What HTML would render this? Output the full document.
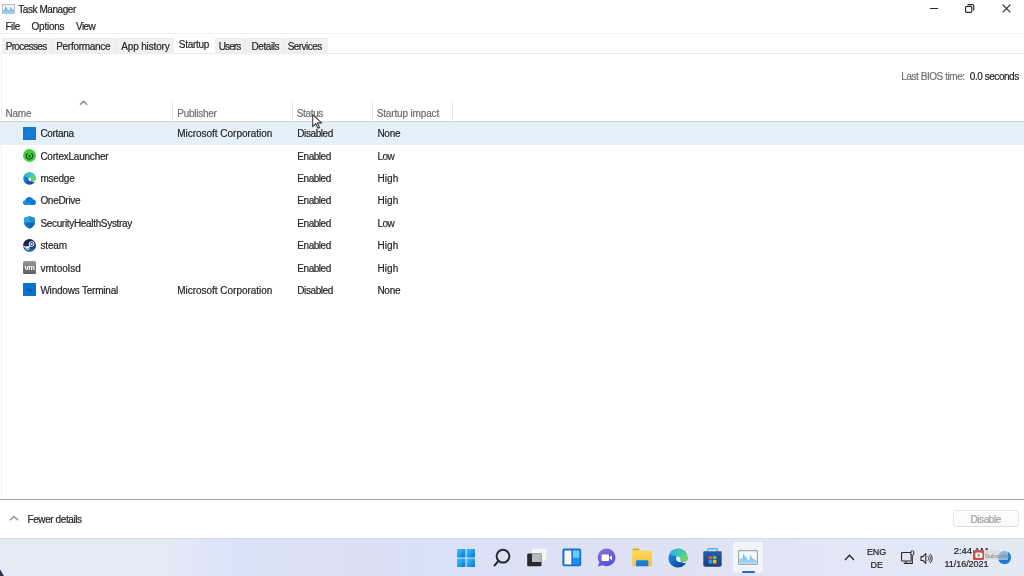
<!DOCTYPE html>
<html><head><meta charset="utf-8">
<style>
html,body{margin:0;padding:0;}
body{width:1024px;height:576px;overflow:hidden;position:relative;background:#fff;font-family:"Liberation Sans",sans-serif;font-size:10px;color:#262626;}
.a{position:absolute;}
.t{position:absolute;white-space:nowrap;line-height:12px;font-size:10px;}
.hl{position:absolute;height:1px;}
.vl{position:absolute;width:1px;}
body > *{filter:blur(0.3px);}
.t{-webkit-text-stroke:0.2px currentColor;}
</style></head><body>
<!-- title bar -->
<svg class="a" style="left:1.5px;top:3.8px" width="13" height="10" viewBox="0 0 13 10">
 <defs><linearGradient id="tmg" x1="0" y1="0" x2="0" y2="1"><stop offset="0" stop-color="#3f9ad8"/><stop offset="1" stop-color="#a6dbf8"/></linearGradient></defs>
 <rect x="0.5" y="0.5" width="12" height="9" fill="#f1f4f8" stroke="#bcbcbc" stroke-width="1"/>
 <path d="M1 9.5 L1 6.5 L2.6 6 L3.8 2 L5 4.8 L6.6 6.4 L7.6 6 L8.7 2.8 L9.8 5.2 L12 5.8 L12 9.5Z" fill="url(#tmg)"/>
</svg>
<!-- window controls -->
<div class="a" style="left:929.5px;top:7.6px;width:8.5px;height:1.3px;background:#2a2a2a"></div>
<svg class="a" style="left:965px;top:4px" width="10" height="9" viewBox="0 0 10 9"><rect x="0.6" y="2.4" width="6.2" height="6" rx="1.2" fill="none" stroke="#2a2a2a" stroke-width="1.2"/><path d="M2.6 0.6 H7.2 A1.6 1.6 0 0 1 8.8 2.2 V6.4" fill="none" stroke="#2a2a2a" stroke-width="1.2"/></svg>
<svg class="a" style="left:1002px;top:4px" width="9" height="9" viewBox="0 0 9 9"><path d="M0.6 0.6 L8.4 8.4 M8.4 0.6 L0.6 8.4" stroke="#2a2a2a" stroke-width="1.2"/></svg>
<!-- menu -->
<div class="hl" style="left:0;top:33px;width:1024px;background:#f0f0f0"></div>
<!-- tabs -->
<div class="a" style="left:2px;top:38px;width:326px;height:15px;background:#f0f0f0"></div>
<div class="vl" style="left:52px;top:39px;height:14px;background:#e9e9e9"></div>
<div class="vl" style="left:115px;top:39px;height:14px;background:#e9e9e9"></div>
<div class="vl" style="left:245px;top:39px;height:14px;background:#e9e9e9"></div>
<div class="vl" style="left:284px;top:39px;height:14px;background:#e9e9e9"></div>
<div class="a" style="left:174px;top:36px;width:41px;height:18px;background:#fff"></div>
<div class="hl" style="left:0;top:53px;width:1024px;background:#ececec"></div>
<!-- BIOS -->
<div class="vl" style="left:1px;top:54px;height:445px;background:#f3f3f3"></div>
<!-- headers -->
<svg class="a" style="left:79px;top:99px" width="10" height="7" viewBox="0 0 10 7"><path d="M1.3 5.4 L4.6 2.2 L7.9 5.4" fill="none" stroke="#8c8c8c" stroke-width="1.35" stroke-linecap="round"/></svg>
<div class="vl" style="left:172px;top:101px;height:20px;background:#e5e5e5"></div>
<div class="vl" style="left:292px;top:101px;height:20px;background:#e5e5e5"></div>
<div class="vl" style="left:372px;top:101px;height:20px;background:#e5e5e5"></div>
<div class="vl" style="left:452px;top:101px;height:20px;background:#e5e5e5"></div>
<div class="hl" style="left:0;top:121px;width:1024px;background:#d2d6dc"></div>
<div class="hl" style="left:0;top:122px;width:1024px;background:#e6eaf0"></div>
<!-- rows -->
<div class="a" style="left:0;top:123px;width:1024px;height:22px;background:linear-gradient(#e3f1f9,#e5f0f9)"></div>
<svg class="a" style="left:23px;top:127.0px" width="13" height="13" viewBox="0 0 13 13"><rect x="0" y="0" width="13" height="13" fill="#1774d2"/><rect x="2" y="2" width="9" height="9" fill="#1a7ad6"/></svg>
<svg class="a" style="left:23px;top:149.3px" width="13" height="13" viewBox="0 0 13 13"><circle cx="6.5" cy="6.5" r="6.5" fill="#3fcf3b"/><path d="M4.3 4.6 A3.2 3.2 0 1 0 8.7 4.6" fill="none" stroke="#1f4a24" stroke-width="1.3" stroke-linecap="round"/><circle cx="6.5" cy="7" r="1.2" fill="#1f4a24"/></svg>
<svg class="a" style="left:23px;top:171.8px" width="13" height="13" viewBox="0 0 20 20">
<defs>
<linearGradient id="ebL" x1="0" y1="0.1" x2="0.5" y2="1"><stop offset="0" stop-color="#22a6e6"/><stop offset="0.55" stop-color="#1272cc"/><stop offset="1" stop-color="#0d4a98"/></linearGradient>
<linearGradient id="egL" x1="0" y1="0" x2="1" y2="0.5"><stop offset="0" stop-color="#2ab2e6"/><stop offset="0.5" stop-color="#36c6c0"/><stop offset="1" stop-color="#6ad85a"/></linearGradient>
</defs>
<circle cx="10" cy="10" r="9.6" fill="url(#ebL)"/>
<path d="M1.6 5.6 A9.7 9.7 0 0 1 19.7 10.8 C19.5 13 17.3 14.2 15 13.9 C13.4 13.7 12.6 12.6 12.6 11.4 C12.6 9.6 11.3 8.3 9.4 8.3 C6.6 8.3 4 7.2 1.6 5.6Z" fill="url(#egL)"/>
<path d="M12.6 11.4 C12.6 9.6 11.3 8.3 9.4 8.3 C8.2 8.5 7.8 10 8.2 11.4 C8.8 13.4 11 14.4 13.6 14.1 C12.9 13.4 12.6 12.4 12.6 11.4Z" fill="#f2f6fb"/>
<path d="M19.7 10.8 C19.5 13 17.3 14.2 15 13.9 L13.6 14.1 C15.6 15.6 17.8 15.6 18.9 14.8 C19.4 13.6 19.7 12.2 19.7 10.8Z" fill="#ffffff"/>
</svg>
<svg class="a" style="left:23px;top:194.0px" width="13" height="13" viewBox="0 0 13 13"><path d="M2.5 11 C0.8 11 0 9.9 0 8.8 C0 7.5 1 6.6 2.2 6.6 C2.6 4.4 4.3 3 6.4 3 C8.2 3 9.6 4 10.2 5.6 C11.9 5.7 13 6.9 13 8.4 C13 9.9 11.8 11 10.3 11Z" fill="#0e78d8"/><path d="M2.5 11 C0.8 11 0 9.9 0 8.8 C0 7.5 1 6.6 2.2 6.6 L10.3 11Z" fill="#1a8be8"/></svg>
<svg class="a" style="left:23px;top:216.4px" width="13" height="13" viewBox="0 0 13 13"><path d="M6.5 0.3 L12 2 L12 6.5 C12 9.5 9.5 11.6 6.5 12.8 C3.5 11.6 1 9.5 1 6.5 L1 2Z" fill="#0f6ec9"/><path d="M6.5 0.3 L12 2 L12 6.5 L1 6.5 L1 2Z" fill="#2aa3e6"/><path d="M6.5 0.3 L6.5 12.8 C9.5 11.6 12 9.5 12 6.5 L12 2Z" fill="#000" opacity="0.12"/></svg>
<svg class="a" style="left:23px;top:238.7px" width="13" height="13" viewBox="0 0 13 13"><defs><linearGradient id="sg" x1="0" y1="0" x2="0" y2="1"><stop offset="0" stop-color="#111d3d"/><stop offset="0.55" stop-color="#19306a"/><stop offset="1" stop-color="#1488d0"/></linearGradient></defs><circle cx="6.5" cy="6.5" r="6.5" fill="url(#sg)"/><circle cx="8.6" cy="5" r="2.4" fill="none" stroke="#fff" stroke-width="1"/><circle cx="8.6" cy="5" r="1" fill="#fff"/><path d="M0.3 7.2 L4.5 8.8 L7.2 6.6" fill="none" stroke="#fff" stroke-width="1.1"/><circle cx="4.6" cy="9" r="1.5" fill="none" stroke="#fff" stroke-width="0.9"/></svg>
<svg class="a" style="left:23px;top:261.0px" width="13" height="13" viewBox="0 0 13 13"><defs><linearGradient id="vg" x1="0" y1="0" x2="0" y2="1"><stop offset="0" stop-color="#9a9a9a"/><stop offset="1" stop-color="#5c5c5c"/></linearGradient></defs><rect x="0" y="0" width="13" height="13" rx="1.5" fill="url(#vg)"/><text x="6.5" y="9" text-anchor="middle" font-family="Liberation Sans" font-size="7.5" font-weight="bold" fill="#fff" letter-spacing="-0.4">vm</text></svg>
<svg class="a" style="left:23px;top:283.4px" width="13" height="13" viewBox="0 0 13 13"><rect x="0" y="0" width="13" height="13" fill="#0a72d0"/><path d="M4.5 5.5 L6.5 6.8 L4.5 8" fill="none" stroke="#1b3553" stroke-width="0.9"/><rect x="7" y="7.5" width="2" height="0.9" fill="#1b3553"/></svg>
<!-- bottom -->
<div class="hl" style="left:0;top:499px;width:1024px;background:#a8a8a8"></div>
<svg class="a" style="left:9px;top:514px" width="10" height="8" viewBox="0 0 10 8"><path d="M1.4 5.8 L5 2.4 L8.6 5.8" fill="none" stroke="#8c8c8c" stroke-width="1.35" stroke-linecap="round"/></svg>
<div class="a" style="left:953px;top:510px;width:64px;height:15px;border:1px solid #e8e8e8;border-bottom-color:#dedede;border-radius:3px;background:#fbfbfb"></div>
<!-- taskbar -->
<div class="a" style="left:0;top:538px;width:1024px;height:38px;background:linear-gradient(90deg,#e3e9f5 0px,#e4e9f6 170px,#dae3f8 230px,#dbe2f6 300px,#dcdff3 360px,#d8e1f9 420px,#dde1f4 560px,#dfe2f3 700px,#e2e6f5 820px,#e4e9f5 1024px)"></div>
<div class="a" style="left:0;top:538px;width:1024px;height:1px;background:#d6dae4"></div>
<svg class="a" style="left:0;top:569px" width="5" height="7" viewBox="0 0 5 7"><path d="M0 0.5 L4 7 L0 7Z" fill="#2c3150"/></svg>
<!-- taskbar icons -->
<svg class="a" style="left:457px;top:549px" width="18" height="18" viewBox="0 0 18 18">
 <defs><linearGradient id="wg" x1="0" y1="0" x2="1" y2="1"><stop offset="0" stop-color="#3fc4fa"/><stop offset="1" stop-color="#0a74d6"/></linearGradient></defs>
 <rect x="0" y="0" width="8.4" height="8.4" rx="0.6" fill="url(#wg)"/><rect x="9.6" y="0" width="8.4" height="8.4" rx="0.6" fill="url(#wg)"/>
 <rect x="0" y="9.6" width="8.4" height="8.4" rx="0.6" fill="url(#wg)"/><rect x="9.6" y="9.6" width="8.4" height="8.4" rx="0.6" fill="url(#wg)"/>
</svg>
<svg class="a" style="left:492px;top:547px" width="20" height="21" viewBox="0 0 20 21">
 <circle cx="11" cy="9.2" r="6.4" fill="none" stroke="#2a2a2a" stroke-width="2"/>
 <path d="M6.6 13.8 L2.6 18.4" stroke="#2a2a2a" stroke-width="2.2" stroke-linecap="round"/>
</svg>
<svg class="a" style="left:527px;top:548px" width="20" height="20" viewBox="0 0 20 20">
 <rect x="5" y="0.8" width="14.3" height="11.6" rx="1" fill="#f3f5f9"/>
 <rect x="0.2" y="5.6" width="14.3" height="12.6" rx="1" fill="#2b2b2b"/>
 <rect x="5" y="5.6" width="9.5" height="8.4" fill="#b9b9bb"/>
</svg>
<svg class="a" style="left:562px;top:548px" width="20" height="19" viewBox="0 0 20 19">
 <rect x="0.4" y="0.4" width="18.8" height="17.8" rx="2" fill="#1a6fd0"/>
 <rect x="2.4" y="2.4" width="7" height="14" rx="0.5" fill="#f7f6f1"/>
 <rect x="11" y="2.4" width="6.4" height="7.5" fill="#62d0fd"/>
 <rect x="11" y="9.9" width="6.4" height="6.5" fill="#1b91f2"/>
</svg>
<svg class="a" style="left:597px;top:548px" width="20" height="20" viewBox="0 0 20 20">
 <defs><linearGradient id="tg" x1="0" y1="0" x2="0.6" y2="1"><stop offset="0" stop-color="#8f72d2"/><stop offset="1" stop-color="#5552d6"/></linearGradient></defs>
 <path d="M9.8 0.5 A9 8.8 0 1 1 5.5 17.2 L0.8 18.4 L2.3 14.2 A9 8.8 0 0 1 9.8 0.5Z" fill="url(#tg)"/>
 <rect x="4.6" y="6.6" width="7.4" height="6.4" rx="0.8" fill="#fff"/>
 <path d="M12.2 9.8 L15 7.2 L15 12.4Z" fill="#fff"/>
</svg>
<svg class="a" style="left:632px;top:548px" width="21" height="19" viewBox="0 0 21 19">
 <defs><linearGradient id="fg" x1="0" y1="0" x2="0" y2="1"><stop offset="0" stop-color="#ffd75a"/><stop offset="1" stop-color="#f7c33a"/></linearGradient></defs>
 <path d="M0.3 2 A1.5 1.5 0 0 1 1.8 0.5 L6.5 0.5 L8.5 2.5 L0.3 2.5Z" fill="#e3a80e"/>
 <rect x="0.3" y="2.5" width="19.8" height="15.7" rx="1" fill="url(#fg)"/>
 <path d="M4 18.2 L4 13.6 A1.4 1.4 0 0 1 5.4 12.2 L15 12.2 A1.4 1.4 0 0 1 16.4 13.6 L16.4 18.2Z" fill="#1b7ed6"/>
</svg>
<svg class="a" style="left:667.5px;top:547.5px" width="20" height="20" viewBox="0 0 20 20">
<defs>
<linearGradient id="ebT" x1="0" y1="0.1" x2="0.5" y2="1"><stop offset="0" stop-color="#22a6e6"/><stop offset="0.55" stop-color="#1272cc"/><stop offset="1" stop-color="#0d4a98"/></linearGradient>
<linearGradient id="egT" x1="0" y1="0" x2="1" y2="0.5"><stop offset="0" stop-color="#2ab2e6"/><stop offset="0.5" stop-color="#36c6c0"/><stop offset="1" stop-color="#6ad85a"/></linearGradient>
</defs>
<circle cx="10" cy="10" r="9.6" fill="url(#ebT)"/>
<path d="M1.6 5.6 A9.7 9.7 0 0 1 19.7 10.8 C19.5 13 17.3 14.2 15 13.9 C13.4 13.7 12.6 12.6 12.6 11.4 C12.6 9.6 11.3 8.3 9.4 8.3 C6.6 8.3 4 7.2 1.6 5.6Z" fill="url(#egT)"/>
<path d="M12.6 11.4 C12.6 9.6 11.3 8.3 9.4 8.3 C8.2 8.5 7.8 10 8.2 11.4 C8.8 13.4 11 14.4 13.6 14.1 C12.9 13.4 12.6 12.4 12.6 11.4Z" fill="#e6eef8"/>
<path d="M19.7 10.8 C19.5 13 17.3 14.2 15 13.9 L13.6 14.1 C15.6 15.6 17.8 15.6 18.9 14.8 C19.4 13.6 19.7 12.2 19.7 10.8Z" fill="#dde1f4"/>
</svg>
<svg class="a" style="left:703px;top:548px" width="19" height="19" viewBox="0 0 19 19">
 <defs><linearGradient id="stg" x1="0" y1="0" x2="0" y2="1"><stop offset="0" stop-color="#245fae"/><stop offset="1" stop-color="#1c3d7a"/></linearGradient></defs>
 <path d="M4.5 4 L4.5 2.3 A1.6 1.6 0 0 1 6.1 0.7 L12.9 0.7 A1.6 1.6 0 0 1 14.5 2.3 L14.5 4" fill="none" stroke="#3cc0f0" stroke-width="1.4"/>
 <path d="M0.3 4.3 A1 1 0 0 1 1.3 3.3 L17.7 3.3 A1 1 0 0 1 18.7 4.3 L18.7 16.8 A2 2 0 0 1 16.7 18.8 L2.3 18.8 A2 2 0 0 1 0.3 16.8Z" fill="url(#stg)"/>
 <rect x="5.6" y="7.9" width="3.5" height="3.4" rx="0.3" fill="#e8542b"/><rect x="9.9" y="7.9" width="3.5" height="3.4" rx="0.3" fill="#7cbf1c"/>
 <rect x="5.6" y="12.1" width="3.5" height="3.4" rx="0.3" fill="#18a8ee"/><rect x="9.9" y="12.1" width="3.5" height="3.4" rx="0.3" fill="#fcba12"/>
</svg>
<div class="a" style="left:733px;top:542px;width:30px;height:31px;border-radius:4px;background:#f2f4fb"></div>
<svg class="a" style="left:738px;top:550px" width="20" height="15" viewBox="0 0 20 15">
 <defs><linearGradient id="tbg" x1="0" y1="0" x2="0" y2="1"><stop offset="0" stop-color="#5db6ec"/><stop offset="1" stop-color="#a8dcf8"/></linearGradient></defs>
 <rect x="0.6" y="0.6" width="18.8" height="13.8" rx="0.8" fill="#f6f8fa" stroke="#a8a8a8" stroke-width="1.2"/>
 <path d="M1.2 13.8 L1.2 9.5 L3 8.6 L4.4 9 L5.4 3.6 L7 6.8 L8.4 7.6 L10 10.2 L11.4 10 L12.6 4.6 L14 8 L16 9.2 L18.8 10.8 L18.8 13.8Z" fill="url(#tbg)"/>
</svg>
<div class="a" style="left:742px;top:570.5px;width:12.5px;height:2px;border-radius:1px;background:#1b6ed0"></div>
<!-- tray -->
<svg class="a" style="left:844px;top:554px" width="11" height="7" viewBox="0 0 11 7"><path d="M1 6 L5.5 1.2 L10 6" fill="none" stroke="#262626" stroke-width="1.3"/></svg>
<svg class="a" style="left:900px;top:550px" width="15" height="15" viewBox="0 0 15 15">
 <rect x="1.55" y="2.55" width="9.6" height="8.4" rx="0.5" fill="none" stroke="#2a2a2a" stroke-width="1.1"/>
 <path d="M6 11 L6 13.4 M3.8 13.4 L12.8 13.4" stroke="#2a2a2a" stroke-width="1.1" fill="none"/>
 <rect x="10.9" y="0.7" width="2.9" height="4.6" rx="1.3" fill="#e3e8f5" stroke="#2a2a2a" stroke-width="1"/>
 <path d="M12.35 5.3 L12.35 13.4" stroke="#2a2a2a" stroke-width="1"/>
</svg>
<svg class="a" style="left:919.5px;top:551.5px" width="15" height="13" viewBox="0 0 15 13">
 <path d="M1 4.6 L3 4.6 L5.8 1.6 L5.8 11.4 L3 8.4 L1 8.4Z" fill="none" stroke="#2a2a2a" stroke-width="1.05" stroke-linejoin="round"/>
 <path d="M7.67 4.51 A2.6 2.6 0 0 1 7.67 8.49 M8.83 3.13 A4.4 4.4 0 0 1 8.83 9.87 M9.99 1.75 A6.2 6.2 0 0 1 9.99 11.25" fill="none" stroke="#2a2a2a" stroke-width="0.95"/>
</svg>
<!-- subscribe overlay -->
<div class="a" style="z-index:5;left:998px;top:551px;width:12.7px;height:12.7px;border-radius:50%;background:#1a7bd6"></div>
<div class="a" style="z-index:6;left:983.7px;top:549.8px;width:24.5px;height:9.8px;background:linear-gradient(90deg,rgba(222,222,224,0.95) 0,rgba(222,222,224,0.95) 13px,rgba(222,224,230,0.6) 15px)"></div>
<div class="a" style="z-index:7;left:985px;top:551.5px;font-size:6.2px;line-height:7px;color:#858585;font-family:'Liberation Sans',sans-serif;letter-spacing:-0.25px">Subscribe</div>
<div class="a" style="z-index:7;left:973px;top:549.9px;width:10.7px;height:10px;background:#c0544c;border-radius:1px"></div>
<svg class="a" style="z-index:8;left:974.5px;top:551.8px" width="8" height="7" viewBox="0 0 8 7"><rect x="0.3" y="0.6" width="7.2" height="5.4" rx="1.6" fill="#f6ebea"/><path d="M2.9 1.9 L5.3 3.3 L2.9 4.7Z" fill="#c0544c"/></svg>
<!-- cursor -->
<svg class="a" style="z-index:10;left:312px;top:114px" width="12" height="16" viewBox="0 0 12 16">
 <path d="M0.7 0.7 L0.7 12.6 L3.7 9.6 L5.9 14.3 L7.6 13.5 L5.4 8.9 L9.6 8.9Z" fill="#fff" stroke="#404040" stroke-width="1.1" stroke-linejoin="round"/>
</svg>
<div class="t" style="left:18.30px;top:4.20px;letter-spacing:-0.442px;color:#262626;font-size:10px">Task Manager</div>
<div class="t" style="left:5.38px;top:20.80px;letter-spacing:-0.360px;color:#262626;font-size:10px">File</div>
<div class="t" style="left:31.54px;top:20.80px;letter-spacing:-0.240px;color:#262626;font-size:10px">Options</div>
<div class="t" style="left:76.04px;top:20.80px;letter-spacing:-0.600px;color:#262626;font-size:10px">View</div>
<div class="t" style="left:5.64px;top:41.20px;letter-spacing:-0.630px;color:#262626;font-size:10px">Processes</div>
<div class="t" style="left:56.22px;top:41.20px;letter-spacing:-0.288px;color:#262626;font-size:10px">Performance</div>
<div class="t" style="left:121.20px;top:41.20px;letter-spacing:-0.144px;color:#262626;font-size:10px">App history</div>
<div class="t" style="left:178.80px;top:39.10px;letter-spacing:-0.300px;color:#262626;font-size:10px">Startup</div>
<div class="t" style="left:218.80px;top:41.20px;letter-spacing:-0.945px;color:#262626;font-size:10px">Users</div>
<div class="t" style="left:251.38px;top:41.20px;letter-spacing:-0.390px;color:#262626;font-size:10px">Details</div>
<div class="t" style="left:287.64px;top:41.20px;letter-spacing:-0.540px;color:#262626;font-size:10px">Services</div>
<div class="t" style="left:901.30px;top:70.50px;letter-spacing:-0.450px;color:#707070;font-size:10px">Last BIOS time:</div>
<div class="t" style="left:969.80px;top:70.50px;letter-spacing:-0.450px;color:#262626;font-size:10px">0.0 seconds</div>
<div class="t" style="left:5.38px;top:107.90px;letter-spacing:-0.180px;color:#6d6d6d;font-size:10px">Name</div>
<div class="t" style="left:177.30px;top:107.90px;letter-spacing:-0.270px;color:#6d6d6d;font-size:10px">Publisher</div>
<div class="t" style="left:296.80px;top:107.90px;letter-spacing:-0.360px;color:#6d6d6d;font-size:10px">Status</div>
<div class="t" style="left:376.72px;top:107.90px;letter-spacing:-0.152px;color:#6d6d6d;font-size:10px">Startup impact</div>
<div class="t" style="left:27.46px;top:513.70px;letter-spacing:-0.405px;color:#262626;font-size:10px">Fewer details</div>
<div class="t" style="left:970.46px;top:514.10px;letter-spacing:-0.420px;color:#a0a0a0;font-size:10px">Disable</div>
<div class="t" style="left:40.38px;top:127.50px;letter-spacing:-0.330px;color:#262626;font-size:10px">Cortana</div>
<div class="t" style="left:177.30px;top:127.50px;letter-spacing:-0.027px;color:#262626;font-size:10px">Microsoft Corporation</div>
<div class="t" style="left:297.30px;top:127.50px;letter-spacing:-0.411px;color:#262626;font-size:10px">Disabled</div>
<div class="t" style="left:377.38px;top:127.50px;letter-spacing:-0.240px;color:#262626;font-size:10px">None</div>
<div class="t" style="left:40.38px;top:150.84px;letter-spacing:-0.222px;color:#262626;font-size:10px">CortexLauncher</div>
<div class="t" style="left:297.30px;top:150.84px;letter-spacing:-0.450px;color:#262626;font-size:10px">Enabled</div>
<div class="t" style="left:377.38px;top:150.84px;letter-spacing:-0.540px;color:#262626;font-size:10px">Low</div>
<div class="t" style="left:40.38px;top:173.18px;letter-spacing:-0.252px;color:#262626;font-size:10px">msedge</div>
<div class="t" style="left:297.30px;top:173.18px;letter-spacing:-0.450px;color:#262626;font-size:10px">Enabled</div>
<div class="t" style="left:377.38px;top:173.18px;letter-spacing:0.120px;color:#262626;font-size:10px">High</div>
<div class="t" style="left:40.38px;top:194.52px;letter-spacing:-0.283px;color:#262626;font-size:10px">OneDrive</div>
<div class="t" style="left:297.30px;top:194.52px;letter-spacing:-0.450px;color:#262626;font-size:10px">Enabled</div>
<div class="t" style="left:377.38px;top:194.52px;letter-spacing:0.120px;color:#262626;font-size:10px">High</div>
<div class="t" style="left:40.38px;top:217.86px;letter-spacing:-0.324px;color:#262626;font-size:10px">SecurityHealthSystray</div>
<div class="t" style="left:297.30px;top:217.86px;letter-spacing:-0.450px;color:#262626;font-size:10px">Enabled</div>
<div class="t" style="left:377.38px;top:217.86px;letter-spacing:-0.540px;color:#262626;font-size:10px">Low</div>
<div class="t" style="left:40.38px;top:240.20px;letter-spacing:-0.135px;color:#262626;font-size:10px">steam</div>
<div class="t" style="left:297.30px;top:240.20px;letter-spacing:-0.450px;color:#262626;font-size:10px">Enabled</div>
<div class="t" style="left:377.38px;top:240.20px;letter-spacing:0.120px;color:#262626;font-size:10px">High</div>
<div class="t" style="left:40.38px;top:262.54px;letter-spacing:0.051px;color:#262626;font-size:10px">vmtoolsd</div>
<div class="t" style="left:297.30px;top:262.54px;letter-spacing:-0.450px;color:#262626;font-size:10px">Enabled</div>
<div class="t" style="left:377.38px;top:262.54px;letter-spacing:0.120px;color:#262626;font-size:10px">High</div>
<div class="t" style="left:40.38px;top:284.88px;letter-spacing:-0.204px;color:#262626;font-size:10px">Windows Terminal</div>
<div class="t" style="left:177.30px;top:284.88px;letter-spacing:-0.027px;color:#262626;font-size:10px">Microsoft Corporation</div>
<div class="t" style="left:297.30px;top:284.88px;letter-spacing:-0.411px;color:#262626;font-size:10px">Disabled</div>
<div class="t" style="left:377.38px;top:284.88px;letter-spacing:-0.240px;color:#262626;font-size:10px">None</div>
<div class="t" style="left:867.10px;top:546.20px;letter-spacing:-0.225px;color:#1f1f1f;font-size:9px">ENG</div>
<div class="t" style="left:870.50px;top:558.90px;letter-spacing:-0.000px;color:#1f1f1f;font-size:9px">DE</div>
<div class="t" style="left:953.83px;top:545.25px;letter-spacing:-0.105px;color:#1f1f1f;font-size:9.5px">2:44 AM</div>
<div class="t" style="left:944.55px;top:558.00px;letter-spacing:-0.050px;color:#1f1f1f;font-size:9px">11/16/2021</div>
</body></html>
